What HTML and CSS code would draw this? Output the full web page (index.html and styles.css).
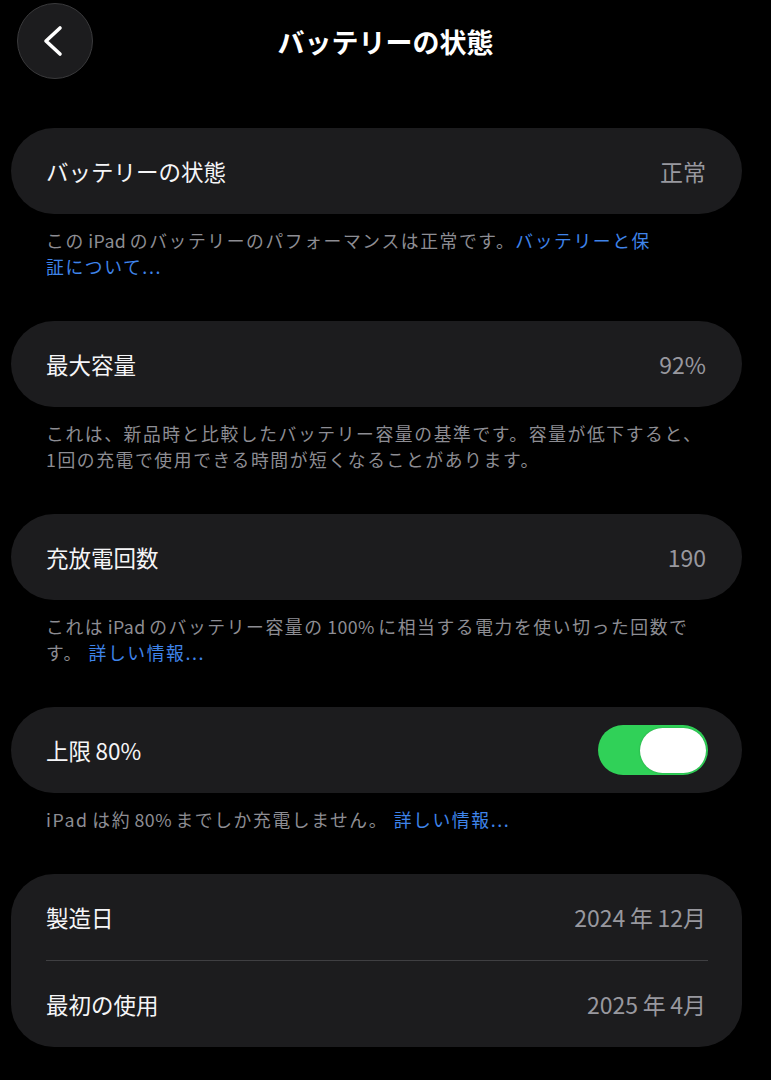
FILE: index.html
```html
<!DOCTYPE html>
<html lang="ja">
<head>
<meta charset="utf-8">
<title>バッテリーの状態</title>
<link rel="stylesheet" href="styles.css">
</head>
<body>
<header class="nav">
  <button class="back" aria-label="戻る">
    <svg width="76" height="76" viewBox="0 0 76 76"><polyline points="43,25 29,38 43,51" fill="none" stroke="#fff" stroke-width="3.6" stroke-linecap="round" stroke-linejoin="round"/></svg>
  </button>
  <h1 class="title">バッテリーの状態</h1>
  <span></span>
</header>
<main class="content">
  <section class="group">
    <div class="card">
      <div class="row"><span class="label">バッテリーの状態</span><span class="value">正常</span></div>
    </div>
    <p class="note">この<span class="lat">iPad</span>のバッテリーのパフォーマンスは正常です。<a class="link">バッテリーと保<br>証について...</a></p>
  </section>
  <section class="group">
    <div class="card">
      <div class="row"><span class="label">最大容量</span><span class="value">92%</span></div>
    </div>
    <p class="note">これは、新品時と比較したバッテリー容量の基準です。容量が低下すると、<br>1回の充電で使用できる時間が短くなることがあります。</p>
  </section>
  <section class="group">
    <div class="card">
      <div class="row"><span class="label">充放電回数</span><span class="value">190</span></div>
    </div>
    <p class="note">これは<span class="lat">iPad</span>のバッテリー容量の<span class="lat">100%</span>に相当する電力を使い切った回数で<br>す。 <a class="link">詳しい情報...</a></p>
  </section>
  <section class="group">
    <div class="card">
      <div class="row row-toggle"><span class="label">上限<span class="lat-l">80%</span></span><span class="toggle" role="switch" aria-checked="true"><span class="knob"></span></span></div>
    </div>
    <p class="note"><span class="lat-r">iPad</span>は約<span class="lat">80%</span>までしか充電しません。 <a class="link">詳しい情報...</a></p>
  </section>
  <section class="group">
    <div class="card">
      <div class="row"><span class="label">製造日</span><span class="value">2024<span class="lat">年</span>12月</span></div>
      <div class="divider"></div>
      <div class="row"><span class="label">最初の使用</span><span class="value">2025<span class="lat">年</span>4月</span></div>
    </div>
  </section>
</main>
</body>
</html>
```

FILE: styles.css
```css
html, body {
  margin: 0;
  padding: 0;
  background: #000;
}

body {
  font-family: "Noto Sans CJK JP", "Noto Sans", sans-serif;
  color: #fff;
  width: 771px;
  height: 1080px;
  overflow: hidden;
}

.nav {
  display: grid;
  grid-template-columns: 1fr auto 1fr;
  align-items: center;
  padding: 3px 17px 0;
  height: 76px;
}

.back {
  width: 76px;
  height: 76px;
  border-radius: 50%;
  background: #1c1c1e;
  border: 1px solid #3a3a3c;
  padding: 0;
  margin: 0;
  box-sizing: border-box;
  display: flex;
  align-items: center;
  justify-content: center;
}

.back svg {
  display: block;
  margin: -1px;
}

.title {
  margin: 0;
  font-size: 27px;
  font-weight: 700;
  line-height: 1;
  color: #fff;
}

.content {
  padding: 49px 29px 0 11px;
}

.group + .group {
  margin-top: 42px;
}

.card {
  background: #1c1c1e;
  border-radius: 43px;
}

.row {
  height: 86px;
  display: flex;
  align-items: center;
  justify-content: space-between;
  padding: 0 36px 0 35px;
}

.row-toggle {
  padding-right: 34px;
}

.label {
  font-size: 22.5px;
  color: #f5f5f7;
  line-height: 1;
}

.value {
  font-size: 23px;
  color: #98989f;
  line-height: 1;
}

.lat {
  margin: 0 0.2em;
}

.lat-l {
  margin-left: 0.2em;
}

.lat-r {
  margin-right: 0.2em;
}

.toggle {
  width: 110px;
  height: 50px;
  border-radius: 25px;
  background: #30d158;
  display: flex;
  align-items: center;
  justify-content: flex-end;
  padding: 0 2px;
  box-sizing: border-box;
}

.knob {
  width: 66px;
  height: 45px;
  border-radius: 23px;
  background: #fff;
  box-shadow: 0 0 2px rgba(0, 0, 0, 0.25);
}

.divider {
  height: 1px;
  background: #3f3f42;
  margin: 0 34px 0 35px;
}

.note {
  margin: 13px 0 0;
  padding: 0 0 0 35px;
  font-size: 17.8px;
  letter-spacing: 1.6px;
  line-height: 26px;
  color: #8d8d93;
  white-space: nowrap;
}

.note .lat {
  letter-spacing: 0.4px;
}

.link {
  color: #3f84ea;
}
```
